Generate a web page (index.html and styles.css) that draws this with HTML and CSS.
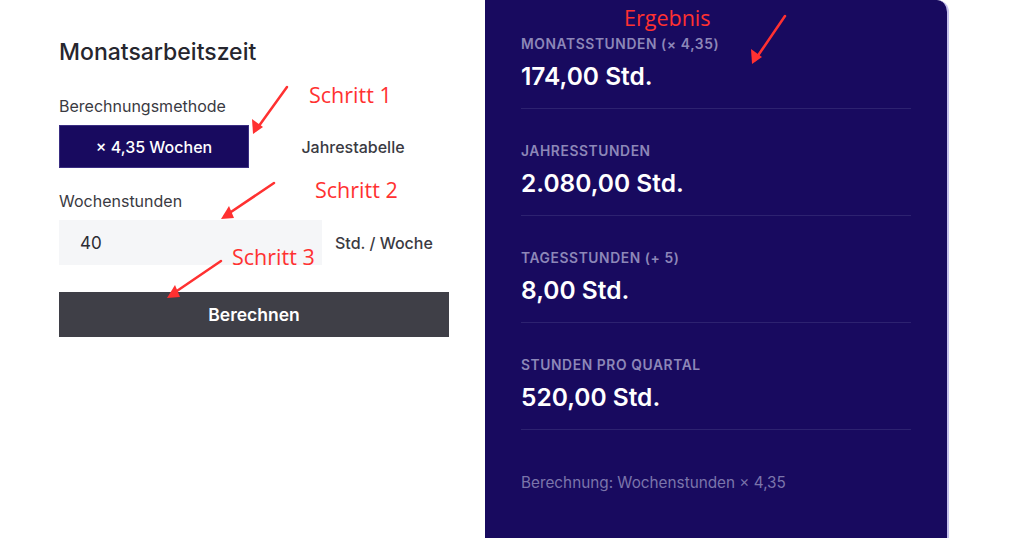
FILE: index.html
```html
<!DOCTYPE html>
<html lang="de">
<head>
    <meta charset="UTF-8">
    <meta name="viewport" content="width=device-width, initial-scale=1.0">
    <title>Monatsarbeitszeit Rechner</title>
    <link rel="stylesheet" href="styles.css">
</head>
<body>
    <div class="page">
        <div class="form-col">
            <h2 class="title">Monatsarbeitszeit</h2>

            <label class="field-label">Berechnungsmethode</label>
            <div class="method-toggle">
                <button class="method active">× 4,35 Wochen</button>
                <button class="method">Jahrestabelle</button>
            </div>

            <label class="field-label">Wochenstunden</label>
            <div class="input-row">
                <input type="text" class="hours-input" value="40">
                <span class="unit">Std. / Woche</span>
            </div>

            <button class="calc-btn">Berechnen</button>
        </div>

        <div class="result-panel">
            <div class="result-item">
                <div class="result-label">Monatsstunden (× 4,35)</div>
                <div class="result-value">174,00 Std.</div>
            </div>
            <div class="result-item">
                <div class="result-label">Jahresstunden</div>
                <div class="result-value">2.080,00 Std.</div>
            </div>
            <div class="result-item">
                <div class="result-label">Tagesstunden (+ 5)</div>
                <div class="result-value">8,00 Std.</div>
            </div>
            <div class="result-item">
                <div class="result-label">Stunden pro Quartal</div>
                <div class="result-value">520,00 Std.</div>
            </div>
            <p class="result-note">Berechnung: Wochenstunden × 4,35</p>
        </div>
    </div>

    <!-- Annotations drawn over the screenshot -->
    <span class="note note-1">Schritt 1</span>
    <span class="note note-2">Schritt 2</span>
    <span class="note note-3">Schritt 3</span>
    <span class="note note-4">Ergebnis</span>
    <svg class="arrows" width="1024" height="538" viewBox="0 0 1024 538">
        <g stroke="#ff3131" stroke-width="2.5" stroke-linecap="round" fill="none">
            <path d="M287 87 L256 130"/>
            <path d="M274 183 L225 216"/>
            <path d="M221 261 L171 295"/>
            <path d="M785 16 L755 60"/>
        </g>
        <g fill="#ff3131">
            <path d="M253 134 L252 119 L263 127 Z"/>
            <path d="M221 219 L229 206 L234 218 Z"/>
            <path d="M167 298 L175 285 L180 297 Z"/>
            <path d="M752 64 L751 49 L762 57 Z"/>
        </g>
    </svg>
</body>
</html>
```

FILE: styles.css
```css
body {
    margin: 0;
    background-color: #fff;
    font-family: Inter, "Noto Sans", sans-serif;
    color: #2b2b33;
    overflow: hidden;
}
.page {
    display: flex;
    height: 538px;
}
.form-col {
    width: 390px;
    margin-left: 59px;
    padding-top: 38px;
    display: flex;
    flex-direction: column;
}
.title {
    margin: 0 0 31px;
    font-size: 23px;
    line-height: 28px;
    font-weight: 500;
    color: #26262e;
}
.field-label {
    font-size: 16px;
    line-height: 19px;
    color: #3a3a42;
    margin-bottom: 9px;
}
.method-toggle {
    display: grid;
    grid-template-columns: 190px 1fr;
    height: 43px;
    margin-bottom: 24px;
}
.method {
    border: none;
    background: none;
    font-family: inherit;
    font-size: 16px;
    font-weight: 500;
    color: #3a3a42;
    padding: 0 0 0 8px;
}
.method.active {
    background-color: #180a5f;
    color: #fff;
    border: 1px solid #3a2e82;
    padding: 0;
}
.input-row {
    display: flex;
    align-items: center;
    gap: 13px;
    margin-bottom: 27px;
}
.hours-input {
    width: 263px;
    height: 45px;
    box-sizing: border-box;
    border: none;
    background-color: #f5f6f8;
    padding: 0 21px;
    font-family: inherit;
    font-size: 17px;
    color: #2b2b33;
}
.unit {
    font-size: 16px;
    font-weight: 500;
    color: #3a3a42;
}
.calc-btn {
    height: 45px;
    border: none;
    background-color: #3f3f47;
    color: #fff;
    font-family: inherit;
    font-size: 17.5px;
    font-weight: 600;
}
.result-panel {
    margin-left: 36px;
    width: 390px;
    padding: 36px 36px 0;
    background-color: #180a5f;
    border-top-right-radius: 12px;
    border-right: 2px solid #c5c0ee;
    color: #fff;
}
.result-item {
    padding-bottom: 17px;
    border-bottom: 1px solid #2d2270;
    margin-bottom: 34px;
}
.result-label {
    font-size: 13.8px;
    line-height: 17px;
    font-weight: 600;
    letter-spacing: 0.6px;
    text-transform: uppercase;
    color: #8d87b8;
    margin-bottom: 8px;
}
.result-value {
    font-size: 24.5px;
    line-height: 30px;
    font-weight: 600;
    color: #fff;
}
.result-note {
    margin: 0;
    padding-top: 9px;
    font-size: 15.3px;
    color: #7b75ab;
}
.note {
    position: absolute;
    font-family: "Open Sans", sans-serif;
    font-size: 21.5px;
    color: #ff3131;
    line-height: 1;
}
.note-1 { left: 309px; top: 84px; }
.note-2 { left: 315px; top: 179px; }
.note-3 { left: 232px; top: 246px; }
.note-4 { left: 624px; top: 7px; }
.arrows {
    position: absolute;
    left: 0;
    top: 0;
    pointer-events: none;
}
```
